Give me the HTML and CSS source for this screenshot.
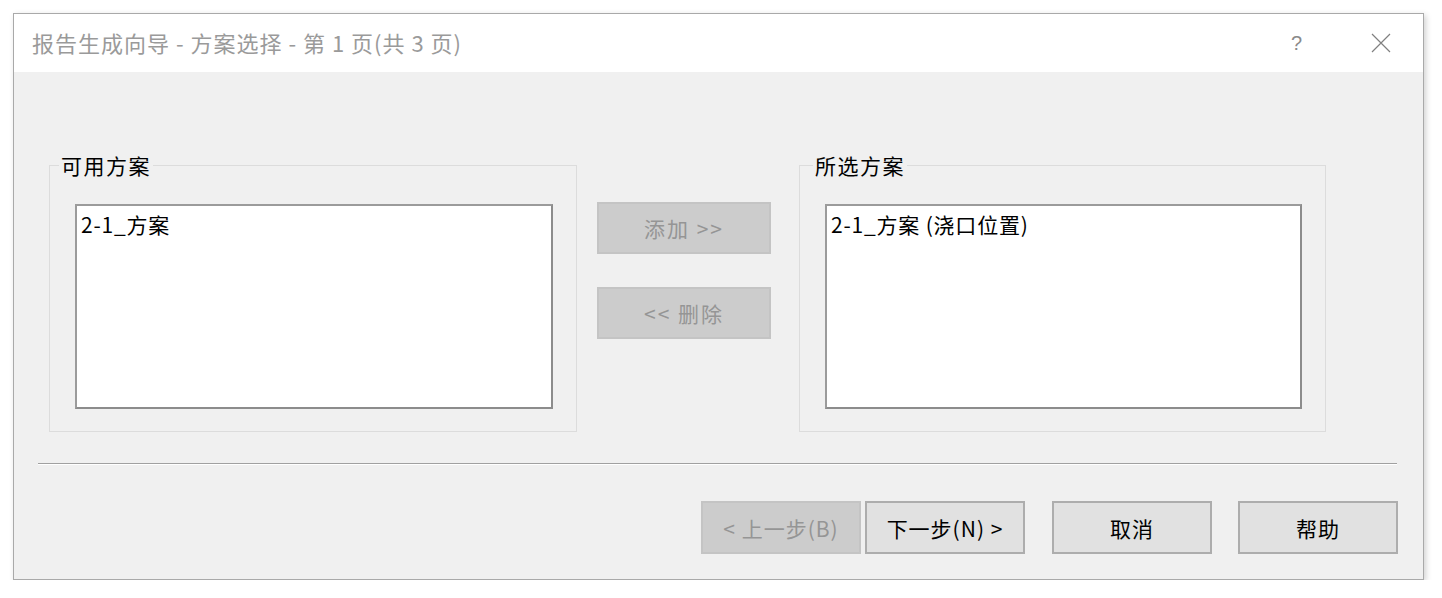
FILE: index.html
```html
<!DOCTYPE html>
<html lang="zh-CN">
<head>
    <meta charset="UTF-8">
    <title>报告生成向导</title>
    <link rel="stylesheet" href="styles.css">
</head>
<body>
    <div class="window">
        <div class="titlebar">
            <span class="title">报告生成向导 - 方案选择 - 第 1 页(共 3 页)</span>
            <span class="title-help">?</span>
            <svg class="title-close" width="20" height="20" viewBox="0 0 20 20">
                <path d="M1 1 L19 19 M19 1 L1 19" stroke="#808080" stroke-width="1.2" fill="none"/>
            </svg>
        </div>

        <div class="content">
            <div class="picker">
                <fieldset class="group group-left">
                    <legend>可用方案</legend>
                    <div class="listbox">
                        <div class="list-item">2-1_方案</div>
                    </div>
                </fieldset>

                <div class="move-buttons">
                    <button class="btn btn-disabled btn-move">添加 &gt;&gt;</button>
                    <button class="btn btn-disabled btn-move">&lt;&lt; 删除</button>
                </div>

                <fieldset class="group group-right">
                    <legend>所选方案</legend>
                    <div class="listbox">
                        <div class="list-item">2-1_方案 (浇口位置)</div>
                    </div>
                </fieldset>
            </div>

            <div class="separator"></div>

            <div class="footer">
                <button class="btn btn-disabled btn-nav">&lt; 上一步(B)</button>
                <button class="btn btn-nav btn-next">下一步(N) &gt;</button>
                <button class="btn btn-nav btn-cancel">取消</button>
                <button class="btn btn-nav btn-help">帮助</button>
            </div>
        </div>
    </div>
</body>
</html>
```

FILE: styles.css
```css
body {
    margin: 0;
    background-color: #ffffff;
    font-family: 'Noto Sans CJK SC', 'Liberation Sans', sans-serif;
    font-size: 21px;
    color: #000000;
}

.window {
    margin: 13px 0 0 13px;
    width: 1409px;
    height: 565px;
    border: 1px solid #a9a9a9;
    background-color: #f0f0f0;
    box-shadow: 2px 2px 6px rgba(0, 0, 0, .18);
    display: flex;
    flex-direction: column;
}

/* Barra de título */
.titlebar {
    height: 58px;
    background-color: #ffffff;
    display: flex;
    align-items: center;
    padding: 0 0 0 18px;
}

.title {
    flex: 1;
    color: #9a9a9a;
    font-size: 22px;
    letter-spacing: 1px;
    line-height: 1;
    padding-bottom: 2px;
}

.title-help {
    color: #8a8a8a;
    font-family: 'Liberation Sans', sans-serif;
    font-size: 20px;
    margin-right: 69px;
}

.title-close {
    margin-right: 32px;
}

.content {
    flex: 1;
    display: flex;
    flex-direction: column;
}

.picker {
    display: flex;
    align-items: flex-start;
    padding: 93px 0 0 35px;
}

.group {
    margin: 0;
    border: 1px solid #dcdcdc;
    padding: 38px 23px 22px 25px;
    position: relative;
}

.group legend {
    position: absolute;
    top: -15px;
    padding: 0 2px;
    background-color: #f0f0f0;
    font-size: 21px;
    letter-spacing: 1.5px;
    line-height: 28px;
}

.group-left {
    width: 478px;
}

.group-left legend {
    left: 9px;
}

.group-right {
    width: 477px;
}

.group-right legend {
    left: 13px;
}

.listbox {
    box-sizing: border-box;
    height: 205px;
    background-color: #ffffff;
    border: 2px solid #8c8c8c;
    border-color: #9b9b9b #8c8c8c #8c8c8c #9b9b9b;
    padding: 4px 4px;
}

.list-item {
    font-size: 21px;
    letter-spacing: 0.8px;
    line-height: 28px;
}

.move-buttons {
    display: flex;
    flex-direction: column;
    gap: 33px;
    margin: 37px 28px 0 20px;
}

.btn {
    font-family: 'Noto Sans CJK SC', 'Liberation Sans', sans-serif;
    font-size: 21px;
    letter-spacing: 1px;
    background-color: #e1e1e1;
    border: 2px solid #adadad;
    color: #000000;
    padding: 0;
}

.btn-disabled {
    background-color: #cccccc;
    border-color: #c4c4c4;
    color: #959595;
}

.btn-move {
    width: 174px;
    height: 52px;
    letter-spacing: 2px;
}

.separator {
    margin: 31px 26px 0 24px;
    height: 1px;
    background-color: #a0a0a0;
    border-bottom: 1px solid #ffffff;
}

.footer {
    display: flex;
    justify-content: flex-end;
    padding: 36px 25px 0 0;
}

.btn-nav {
    width: 160px;
    height: 53px;
}

.btn-next {
    margin-left: 4px;
}

.btn-cancel {
    margin-left: 27px;
}

.btn-help {
    margin-left: 26px;
}
```
